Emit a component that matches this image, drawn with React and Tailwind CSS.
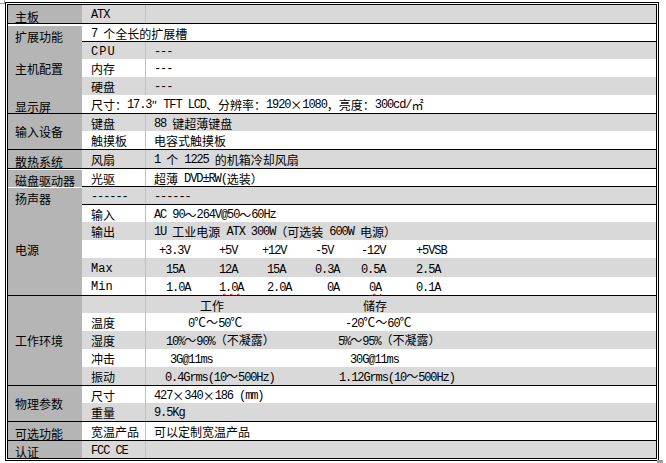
const Mix = ({ s, a = "text-[12px] tracking-[-1.1px]" }) =>
  s
    .split(/([\x20-\x7e±]+|×)/)
    .filter(Boolean)
    .map((p, i) => {
      if (p === "×")
        return (
          <span key={i} className="inline-block w-[12px] text-center">
            ×
          </span>
        );
      if (/^[\x20-\x7e±]+$/.test(p))
        return (
          <span
            key={i}
            className={`[font-family:'Liberation_Mono',monospace] whitespace-pre ${a}`}
          >
            {p}
          </span>
        );
      return <span key={i}>{p}</span>;
    });

const Row = ({ h, gray, children }) => (
  <div className={`flex ${h} ${gray ? "bg-[#d9d9d9]" : "bg-white"}`}>
    {children}
  </div>
);

const C2 = ({ children }) => (
  <div className="w-[63px] shrink-0 pl-[9px] pt-[2px] flex items-center whitespace-nowrap">
    {children}
  </div>
);

const C3 = ({ children, className = "pl-[8px]" }) => (
  <div
    className={`flex-1 border-l border-[#c0c0c0] pt-[2px] flex items-center whitespace-nowrap ${className}`}
  >
    {children}
  </div>
);

const Span = ({ children }) => (
  <div className="flex-1 pl-[9px] pt-[2px] flex items-center whitespace-nowrap">
    {children}
  </div>
);

const Group = ({ label, labelClass = "items-center", last, children }) => (
  <div className={`flex ${last ? "" : "border-b border-black"}`}>
    <div
      className={`w-[74px] shrink-0 bg-[#b5b5b5] flex pl-[7px] whitespace-nowrap ${labelClass}`}
    >
      {label}
    </div>
    <div className="flex-1 flex flex-col">{children}</div>
  </div>
);

// 电源 columns: +3.3V / +5V / +12V / -5V / -12V / +5VSB
const Volt = ({ cells }) => (
  <div className="flex-1 border-l border-[#c0c0c0] pt-[2px] pl-[13px] flex items-center whitespace-nowrap">
    {cells}
  </div>
);

const Wavy = ({ s }) => (
  <span className="underline decoration-wavy decoration-[#ff0000] decoration-1 underline-offset-[2px]">
    <Mix s={s} />
  </span>
);

const App = () => {
  return (
    <div className="relative w-[666px] h-[463px] bg-white overflow-hidden text-black text-[12px] leading-none [font-family:'Noto_Sans_CJK_SC',sans-serif]">
      <div className="absolute left-0 top-0 w-[5px] h-[4px] border-r border-b border-[#9aa3b5]" />
      <div className="pt-[2px] pl-[5px]">
        <div className="w-[654px] border border-black p-px bg-white">
          <div className="border border-black overflow-hidden">
            <Group label="主板" labelClass="items-end">
              <Row h="h-[18px]" gray>
                <C2>
                  <Mix s="ATX" />
                </C2>
                <C3 />
              </Row>
            </Group>

            <Group label="扩展功能" labelClass="items-end translate-y-[2px]">
              <Row h="h-[17px]">
                <Span>
                  <Mix s="7 个全长的扩展槽" />
                </Span>
              </Row>
            </Group>

            <Group label="主机配置" last>
              <Row h="h-[17px]" gray>
                <C2>
                  <Mix s="CPU" a="text-[12px] tracking-[1px]" />
                </C2>
                <C3>
                  <Mix s="---" />
                </C3>
              </Row>
              <Row h="h-[18px]">
                <C2>内存</C2>
                <C3>
                  <Mix s="---" />
                </C3>
              </Row>
              <Row h="h-[18px]" gray>
                <C2>硬盘</C2>
                <C3>
                  <Mix s="---" />
                </C3>
              </Row>
            </Group>

            <Group label="显示屏" labelClass="items-end">
              <Row h="h-[18px]">
                <Span>
                  <Mix s="尺寸：17.3″ TFT LCD、分辨率：1920×1080，亮度：300cd/㎡" />
                </Span>
              </Row>
            </Group>

            <Group label="输入设备">
              <Row h="h-[17px]" gray>
                <C2>键盘</C2>
                <C3>
                  <Mix s="88 键超薄键盘" />
                </C3>
              </Row>
              <Row h="h-[18px]">
                <C2>触摸板</C2>
                <C3>电容式触摸板</C3>
              </Row>
            </Group>

            <Group label="散热系统" labelClass="items-end">
              <Row h="h-[18px]" gray>
                <C2>风扇</C2>
                <C3>
                  <Mix s="1 个 1225 的机箱冷却风扇" />
                </C3>
              </Row>
            </Group>

            <Group label="磁盘驱动器" labelClass="items-end translate-y-[1px]">
              <Row h="h-[17px]">
                <C2>光驱</C2>
                <C3>
                  <Mix s="超薄 DVD±RW(选装）" />
                </C3>
              </Row>
            </Group>

            <Group label="扬声器" labelClass="items-end translate-y-[1px]">
              <Row h="h-[17px]" gray>
                <C2>
                  <Mix s="------" />
                </C2>
                <C3>
                  <Mix s="------" />
                </C3>
              </Row>
            </Group>

            <Group label="电源">
              <Row h="h-[17px]">
                <C2>输入</C2>
                <C3>
                  <Mix s="AC 90～264V@50～60Hz" />
                </C3>
              </Row>
              <Row h="h-[18px]" gray>
                <C2>输出</C2>
                <C3>
                  <Mix s="1U 工业电源 ATX 300W（可选装 600W 电源）" />
                </C3>
              </Row>
              <Row h="h-[18px]">
                <C2 />
                <Volt
                  cells={
                    <>
                      <div className="w-[60px]"><Mix s="+3.3V" /></div>
                      <div className="w-[43px]"><Mix s="+5V" /></div>
                      <div className="w-[53px]"><Mix s="+12V" /></div>
                      <div className="w-[46px]"><Mix s="-5V" /></div>
                      <div className="w-[55px]"><Mix s="-12V" /></div>
                      <div><Mix s="+5VSB" /></div>
                    </>
                  }
                />
              </Row>
              <Row h="h-[19px]" gray>
                <C2>
                  <Mix s="Max" a="text-[12px] tracking-[0px]" />
                </C2>
                <Volt
                  cells={
                    <>
                      <div className="w-[60px] pl-[7px]"><Mix s="15A" /></div>
                      <div className="w-[43px]"><Mix s="12A" /></div>
                      <div className="w-[53px] pl-[5px]"><Mix s="15A" /></div>
                      <div className="w-[46px]"><Mix s="0.3A" /></div>
                      <div className="w-[55px]"><Mix s="0.5A" /></div>
                      <div><Mix s="2.5A" /></div>
                    </>
                  }
                />
              </Row>
              <Row h="h-[18px]">
                <C2>
                  <Mix s="Min" a="text-[12px] tracking-[0px]" />
                </C2>
                <Volt
                  cells={
                    <>
                      <div className="w-[60px] pl-[7px]"><Mix s="1.0A" /></div>
                      <div className="w-[43px]"><Wavy s="1.0A" /></div>
                      <div className="w-[53px] pl-[5px]"><Mix s="2.0A" /></div>
                      <div className="w-[46px] pl-[12px]"><Mix s="0A" /></div>
                      <div className="w-[55px] pl-[8px]"><Wavy s="0A" /></div>
                      <div><Mix s="0.1A" /></div>
                    </>
                  }
                />
              </Row>
            </Group>

            <Group label="工作环境">
              <Row h="h-[17px]" gray>
                <C2 />
                <C3 className="pl-0">
                  <div className="w-[180px] pl-[54px]">工作</div>
                  <div className="pl-[37px]">储存</div>
                </C3>
              </Row>
              <Row h="h-[18px]">
                <C2>温度</C2>
                <C3 className="pl-0">
                  <div className="w-[180px] pl-[42px]"><Mix s="0℃～50℃" /></div>
                  <div className="pl-[19px]"><Mix s="-20℃～60℃" /></div>
                </C3>
              </Row>
              <Row h="h-[18px]" gray>
                <C2>湿度</C2>
                <C3 className="pl-0">
                  <div className="w-[180px] pl-[20px]"><Mix s="10%～90%（不凝露）" /></div>
                  <div className="pl-[12px]"><Mix s="5%～95%（不凝露）" /></div>
                </C3>
              </Row>
              <Row h="h-[18px]">
                <C2>冲击</C2>
                <C3 className="pl-0">
                  <div className="w-[180px] pl-[24px]"><Mix s="3G@11ms" /></div>
                  <div className="pl-[24px]"><Mix s="30G@11ms" /></div>
                </C3>
              </Row>
              <Row h="h-[18px]" gray>
                <C2>振动</C2>
                <C3 className="pl-0">
                  <div className="w-[180px] pl-[19px]"><Mix s="0.4Grms(10～500Hz)" /></div>
                  <div className="pl-[13px]"><Mix s="1.12Grms(10～500Hz)" /></div>
                </C3>
              </Row>
            </Group>

            <Group label="物理参数">
              <Row h="h-[17px]">
                <C2>尺寸</C2>
                <C3>
                  <Mix s="427×340×186 (mm)" />
                </C3>
              </Row>
              <Row h="h-[18px]" gray>
                <C2>重量</C2>
                <C3>
                  <Mix s="9.5Kg" />
                </C3>
              </Row>
            </Group>

            <Group label="可选功能" labelClass="items-end">
              <Row h="h-[18px]">
                <C2>宽温产品</C2>
                <C3>可以定制宽温产品</C3>
              </Row>
            </Group>

            <Group label="认证" labelClass="items-end" last>
              <Row h="h-[17px]" gray>
                <C2>
                  <Mix s="FCC CE" />
                </C2>
                <C3 />
              </Row>
            </Group>
          </div>
        </div>
      </div>
      <div className="absolute left-[657px] top-[460px] w-[6px] h-[3px] bg-[#a0a0a0]" />
    </div>
  );
};

export default App;
